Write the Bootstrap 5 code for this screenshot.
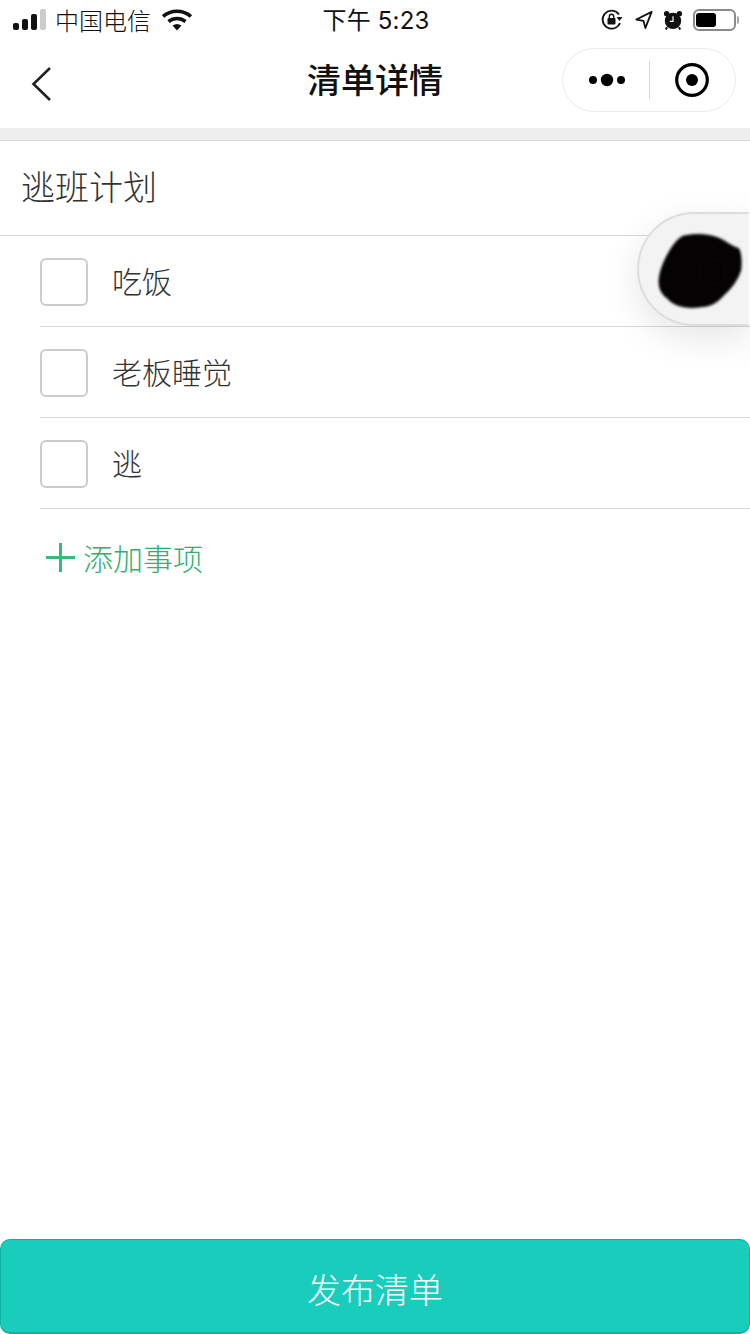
<!doctype html>
<html lang="zh">
<head>
<meta charset="utf-8">
<title>清单详情</title>
<link href="https://cdn.jsdelivr.net/npm/bootstrap@5.3.0/dist/css/bootstrap.min.css" rel="stylesheet">
<style>
html,body{height:100%}
body{font-family:"Noto Sans CJK SC","Liberation Sans",sans-serif;background:#fff;overflow:hidden}
.app-screen{width:750px;height:1334px;position:relative}
.status-bar{height:40px;padding:0 11px 0 13px;color:#111}
.status-side{width:300px}
.carrier{font-size:24px;font-weight:300;line-height:40px;color:#111;margin-left:9px;margin-right:11px}
.clock{font-family:Inter,"Noto Sans CJK SC",sans-serif;font-size:24px;font-weight:400;line-height:40px;color:#111;letter-spacing:.2px;padding-top:2px}
.battery{width:43px;height:22px;border:2px solid #8a8a8a;border-radius:6px;padding:2px 1px;margin-left:10px}
.battery-fill{width:20px;height:14px;background:#000;border-radius:3px}
.battery-tip{width:2px;height:8px;background:#aaa;border-radius:0 2px 2px 0;margin-left:1px}
.status-lock{margin-right:12px}
.status-arrow{margin-right:10px}
.nav-head{height:88px}
.nav-back{left:30px;top:26px}
.nav-title{font-size:34px;font-weight:500;color:#111;line-height:78px}
.capsule{right:14px;top:8px;width:174px;height:64px;border:1px solid #ebebeb;border-radius:32px}
.capsule-part{width:86px}
.dots-part{padding-left:4px}
.capsule-rule{width:1px;height:38px;background:#d9d9d9}
.gap-band{height:13px;background:#eee;border-bottom:1px solid #d8d8d8}
.list-title{height:95px;padding-left:21px;font-size:34px;font-weight:300;color:#333;border-bottom:1px solid #d8d8d8;padding-bottom:6px}
.todo-row{height:91px;margin-left:40px;border-bottom:1px solid #d8d8d8;font-size:30px;font-weight:300;color:#333;padding-top:2px}
.todo-box{width:48px;height:48px;border:2px solid #ccc;border-radius:6px;margin-right:24px}
.todo-text{margin-bottom:4px}
.add-row{padding:26px 0 0 46px;font-size:30px;font-weight:300;line-height:44px;color:#2fb070}
.add-row svg{margin-right:8px}
.float-pill{left:637px;top:212px;width:113px;height:114px;background:#f3f3f3;border:2px solid #ddd;border-right-color:#fafafa;border-radius:57px 0 0 57px;box-shadow:0 12px 36px rgba(0,0,0,.1)}
.ink-blot{left:18px;top:19px;filter:blur(1.2px)}
.publish-btn{position:absolute;left:0;right:0;bottom:0;height:95px;background:#18cdbc;border:1px solid #10b3a3;border-bottom-width:2px;border-radius:10px;color:#fff;font-size:34px;font-weight:300;padding:5px 0 0}
.publish-btn:hover{background:#18cdbc;color:#fff;border-color:#10b3a3}
</style>
</head>
<body>
<div class="app-screen">
  <div class="status-bar d-flex align-items-center justify-content-between">
    <div class="status-side d-flex align-items-center">
      <svg width="33" height="22" viewBox="0 0 33 22"><rect x="0" y="14" width="6" height="7" rx="2" fill="#111"/><rect x="9" y="10" width="6" height="11" rx="2" fill="#111"/><rect x="18" y="5" width="6" height="16" rx="2" fill="#111"/><rect x="27" y="0" width="6" height="21" rx="2" fill="#ccc"/></svg>
      <span class="carrier">中国电信</span>
      <svg width="30" height="22" viewBox="0 0 30 22"><path d="M1 7.5C9 .5 21 .5 29 7.5" fill="none" stroke="#111" stroke-width="3.6"/><path d="M6.5 12.5c5-4 12-4 17 0" fill="none" stroke="#111" stroke-width="3.6"/><path d="M10.5 16.5c3-2 6-2 9 0L15 21.5z" fill="#111"/></svg>
    </div>
    <div class="clock">下午 5:23</div>
    <div class="status-side d-flex align-items-center justify-content-end">
      <svg width="22" height="22" viewBox="0 0 22 22" class="status-lock"><path d="M18 5.5A9 9 0 1 0 19 14" fill="none" stroke="#111" stroke-width="1.8"/><path d="M15.5 8h6l-3 4z" fill="#111"/><rect x="6.5" y="9" width="8" height="6.5" rx="1" fill="#111"/><path d="M8.3 9V7.5a2.2 2.2 0 0 1 4.4 0V9" fill="none" stroke="#111" stroke-width="1.4"/></svg>
      <svg width="18" height="22" viewBox="0 0 20 22" class="status-arrow"><path d="M18.5 2 1.5 10.5l8 1.5 2 8z" fill="none" stroke="#111" stroke-width="2" stroke-linejoin="round"/></svg>
      <svg width="20" height="22" viewBox="0 0 22 22"><circle cx="11" cy="12" r="9" fill="#111"/><path d="M11 7v5.5H7.5" fill="none" stroke="#fff" stroke-width="1.3"/><circle cx="4" cy="4" r="3" fill="#111"/><circle cx="18" cy="4" r="3" fill="#111"/><path d="M4.5 19l-1.5 2.5M17.5 19l1.5 2.5" stroke="#111" stroke-width="2.2"/></svg>
      <div class="battery"><div class="battery-fill"></div></div>
      <div class="battery-tip"></div>
    </div>
  </div>

  <div class="nav-head position-relative text-center">
    <svg class="nav-back position-absolute" width="24" height="36" viewBox="0 0 24 36"><path d="M20 2 3.5 18 20 34" fill="none" stroke="#222" stroke-width="2.6"/></svg>
    <div class="nav-title">清单详情</div>
    <div class="capsule position-absolute d-flex align-items-center">
      <div class="capsule-part dots-part d-flex justify-content-center">
        <svg width="40" height="14" viewBox="0 0 40 14"><circle cx="5" cy="7" r="4" fill="#000"/><circle cx="19" cy="7" r="6.2" fill="#000"/><circle cx="33" cy="7" r="4" fill="#000"/></svg>
      </div>
      <div class="capsule-rule"></div>
      <div class="capsule-part d-flex justify-content-center">
        <svg width="36" height="36" viewBox="0 0 36 36"><circle cx="18" cy="18" r="15.3" fill="none" stroke="#000" stroke-width="3.2"/><circle cx="18" cy="18" r="6" fill="#000"/></svg>
      </div>
    </div>
  </div>

  <div class="gap-band"></div>
  <div class="list-title d-flex align-items-center">逃班计划</div>
  <div class="todo-row d-flex align-items-center"><span class="todo-box"></span><span class="todo-text">吃饭</span></div>
  <div class="todo-row d-flex align-items-center"><span class="todo-box"></span><span class="todo-text">老板睡觉</span></div>
  <div class="todo-row d-flex align-items-center"><span class="todo-box"></span><span class="todo-text">逃</span></div>
  <div class="add-row d-flex align-items-center">
    <svg width="29" height="29" viewBox="0 0 29 29"><path d="M14.5 0v29M0 14.5h29" stroke="#3bb878" stroke-width="3"/></svg>
    添加事项
  </div>

  <div class="float-pill position-absolute">
    <svg class="ink-blot position-absolute" width="86" height="78" viewBox="0 0 86 78">
      <path d="M2 46C3 32 16 8 26 3c12-3 28-2 38 3 6 3 12 8 17 9 3 2 4 12 3 22-3 10-10 19-18 26-6 7-14 11-22 11-12 2-26 0-33-8C4 61 1 54 2 46z" fill="#050203" stroke="#444" stroke-opacity=".5" stroke-width="2"/>
      <circle cx="56" cy="39" r="13" fill="none" stroke="#1a0a0c" stroke-width="3" opacity=".35"/>
    </svg>
  </div>

  <button type="button" class="btn publish-btn">发布清单</button>
</div>
<script src="https://cdn.jsdelivr.net/npm/bootstrap@5.3.0/dist/js/bootstrap.bundle.min.js"></script>
</body>
</html>
